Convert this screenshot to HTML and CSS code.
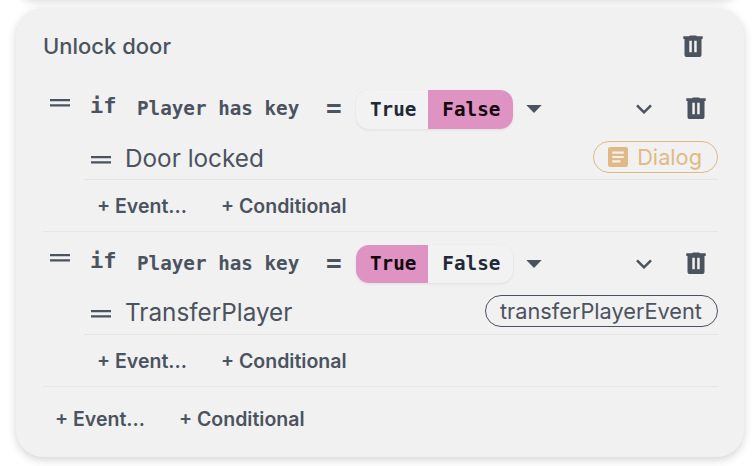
FILE: index.html
```html
<!DOCTYPE html>
<html lang="en">
<head>
<meta charset="utf-8">
<title>Unlock door</title>
<link rel="stylesheet" href="styles.css">
</head>
<body>
<svg class="defs" aria-hidden="true">
  <symbol id="grip" viewBox="0 0 20 8"><path d="M0 0h20v2.300H0zM0 5.200h20v2.300H0z"/></symbol>
  <symbol id="trash" viewBox="0 0 20 23"><path fill-rule="evenodd" d="M6 1.300 7 .4h6l1 .9h5.700v2.600h-1.200v15.600a2.600 2.600 0 0 1-2.600 2.600H4.100a2.600 2.600 0 0 1-2.600-2.600V3.900H.3V1.300zM6.300 5.800v11.400h2.500V5.800zm4.900 0v11.400h2.500V5.800z"/></symbol>
  <symbol id="chevron" viewBox="0 0 16 10"><path d="m1 1.300 7 7 7-7" fill="none" stroke="currentColor" stroke-width="2.500"/></symbol>
  <symbol id="caret" viewBox="0 0 16 8"><path d="M.3 0h15.400L8 8z"/></symbol>
  <symbol id="article" viewBox="0 0 20 20"><path fill-rule="evenodd" d="M2.200 0h15.600A2.200 2.200 0 0 1 20 2.200v15.600a2.200 2.200 0 0 1-2.200 2.200H2.200A2.200 2.200 0 0 1 0 17.800V2.200A2.200 2.200 0 0 1 2.200 0zM4.200 4.500v2.200h11.600V4.500zm0 4.400v2.200h11.600V8.900zm0 4.400v2.200h8.200v-2.200z"/></symbol>
</svg>
<div class="previous-card"></div>
<main class="card">
  <header class="card-header">
    <h1 class="title">Unlock door</h1>
    <svg class="trash"><use href="#trash"/></svg>
  </header>
  <section class="block">
    <div class="condition">
      <svg class="grip"><use href="#grip"/></svg>
      <span class="keyword">if</span>
      <span class="variable">Player has key</span>
      <span class="equals">=</span>
      <div class="toggle"><span class="option">True</span><span class="option selected">False</span></div>
      <svg class="caret"><use href="#caret"/></svg>
      <svg class="chevron"><use href="#chevron"/></svg>
      <svg class="trash"><use href="#trash"/></svg>
    </div>
    <div class="event">
      <svg class="grip"><use href="#grip"/></svg>
      <span class="event-name">Door locked</span>
      <span class="pill dialog"><svg class="article"><use href="#article"/></svg><span class="pill-text">Dialog</span></span>
    </div>
    <div class="actions"><span>+ Event...</span><span>+ Conditional</span></div>
  </section>
  <section class="block">
    <div class="condition">
      <svg class="grip"><use href="#grip"/></svg>
      <span class="keyword">if</span>
      <span class="variable">Player has key</span>
      <span class="equals">=</span>
      <div class="toggle short"><span class="option selected">True</span><span class="option">False</span></div>
      <svg class="caret"><use href="#caret"/></svg>
      <svg class="chevron"><use href="#chevron"/></svg>
      <svg class="trash"><use href="#trash"/></svg>
    </div>
    <div class="event compact">
      <svg class="grip"><use href="#grip"/></svg>
      <span class="event-name">TransferPlayer</span>
      <span class="pill"><span class="pill-text">transferPlayerEvent</span></span>
    </div>
    <div class="actions"><span>+ Event...</span><span>+ Conditional</span></div>
  </section>
  <footer class="actions footer"><span>+ Event...</span><span>+ Conditional</span></footer>
</main>
</body>
</html>
```
FILE: styles.css
```css
* { box-sizing: border-box; }
body {
  margin: 0;
  height: 466px;
  overflow: hidden;
  background: #fff;
  color: #4b535f;
  font-family: Inter, "Liberation Sans", sans-serif;
}
svg { display: block; flex: none; fill: currentColor; }
.defs { position: absolute; width: 0; height: 0; }
.previous-card {
  height: 40px;
  margin: -40px 16px 8px;
  border-radius: 26px;
  box-shadow: 0 2px 8px rgba(0, 0, 0, .14);
}
.card {
  height: 449px;
  margin: 0 12px 0 16px;
  padding: 0 26px 0 27px;
  border-radius: 27px;
  background: #f1f1f1;
  box-shadow: 0 3px 9px rgba(0, 0, 0, .17);
}
.card-header {
  display: flex;
  align-items: center;
  justify-content: space-between;
  height: 69px;
  padding: 7px 15px 0 0;
}
.title { margin: 0; font-size: 22px; font-weight: 450; line-height: 28px; }
.trash { width: 20px; height: 23px; }
.block { height: 155px; border-bottom: 1px solid #e5e5ea; }
.condition {
  display: flex;
  align-items: center;
  height: 64px;
  padding: 0 12px 0 7px;
  font-family: "DejaVu Sans Mono", monospace;
  font-size: 19.25px;
  font-weight: 700;
}
.grip { width: 20px; height: 8px; }
.condition .grip { margin-bottom: 13px; }
.keyword { width: 27px; margin: 0 0 7px 20px; font-size: 22px; }
.variable { width: 162px; margin: 0 0 2px 20px; white-space: nowrap; }
.equals { width: 16px; margin: 0 0 2px 27px; font-size: 26px; line-height: 30px; }
.toggle {
  display: flex;
  height: 39px;
  margin-left: 14px;
  overflow: hidden;
  border-radius: 13px;
  background: #f2f2f2;
  box-shadow: 0 1px 3px rgba(0, 0, 0, .08);
  color: #1f2937;
}
.short { height: 38px; margin-bottom: 1px; }
.option { padding: 0 12px 0 14px; line-height: 39px; }
.option + .option { padding-right: 13px; }
.short .option { line-height: 38px; }
.selected { background: #df93c2; color: #12080e; }
.caret { width: 16px; height: 8px; margin-left: 13px; }
.chevron { width: 16px; height: 10px; margin-left: auto; }
.condition .trash { margin-left: 34px; margin-bottom: 1px; }
.event {
  display: flex;
  align-items: center;
  height: 39px;
  margin-left: 41px;
  padding: 0 0 6px 7px;
  border-bottom: 1px solid #e5e5e5;
}
.event .grip { margin-top: 5px; }
.event-name { margin: 2px 0 0 14px; font-size: 24.3px; line-height: 30px; }
.compact { padding-bottom: 8px; }
.pill {
  display: flex;
  align-items: center;
  height: 32px;
  margin-left: auto;
  padding: 0 15px 0 14px;
  border: 1px solid currentColor;
  border-radius: 16px;
  font-size: 21.75px;
}
.dialog { color: #e1b985; }
.article { width: 20px; height: 20px; margin-right: 9px; }
.actions {
  display: flex;
  gap: 34px;
  height: 51px;
  padding-left: 54px;
  font-size: 19.5px;
  font-weight: 600;
  line-height: 53px;
}
.footer { padding: 6px 0 0 12px; }
```
